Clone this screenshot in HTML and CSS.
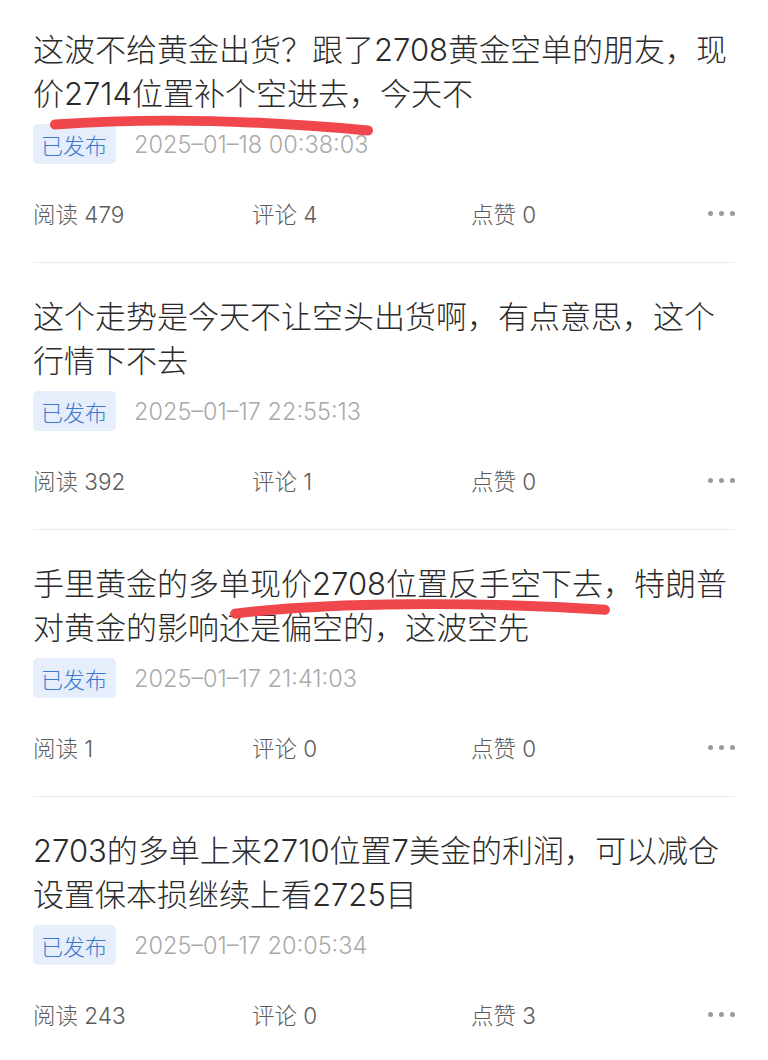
FILE: index.html
```html
<!DOCTYPE html>
<html lang="zh-CN">
<head>
<meta charset="utf-8">
<title>动态列表</title>
<link rel="stylesheet" href="styles.css">
</head>
<body>
<div class="list">
  <div class="item">
    <div class="title">这波不给黄金出货？跟了2708黄金空单的朋友，现价2714位置补个空进去，今天不</div>
    <div class="meta"><span class="badge">已发布</span><span class="date">2025–01–18 00:38:03</span></div>
    <div class="stats"><span>阅读 479</span><span>评论 4</span><span>点赞 0</span><span class="more"><i></i><i></i><i></i></span></div>
    <svg class="mark" viewBox="0 0 702 263" preserveAspectRatio="none"><path d="M22 125 C 117 118, 227 121, 335 131"/></svg>
  </div>
  <div class="item">
    <div class="title">这个走势是今天不让空头出货啊，有点意思，这个行情下不去</div>
    <div class="meta"><span class="badge">已发布</span><span class="date">2025–01–17 22:55:13</span></div>
    <div class="stats"><span>阅读 392</span><span>评论 1</span><span>点赞 0</span><span class="more"><i></i><i></i><i></i></span></div>
  </div>
  <div class="item">
    <div class="title">手里黄金的多单现价2708位置反手空下去，特朗普对黄金的影响还是偏空的，这波空先</div>
    <div class="meta"><span class="badge">已发布</span><span class="date">2025–01–17 21:41:03</span></div>
    <div class="stats"><span>阅读 1</span><span>评论 0</span><span>点赞 0</span><span class="more"><i></i><i></i><i></i></span></div>
    <svg class="mark" viewBox="0 0 702 267" preserveAspectRatio="none"><path d="M202 84 C 297 72, 447 72, 572 80"/></svg>
  </div>
  <div class="item">
    <div class="title">2703的多单上来2710位置7美金的利润，可以减仓设置保本损继续上看2725目</div>
    <div class="meta"><span class="badge">已发布</span><span class="date">2025–01–17 20:05:34</span></div>
    <div class="stats"><span>阅读 243</span><span>评论 0</span><span>点赞 3</span><span class="more"><i></i><i></i><i></i></span></div>
  </div>
</div>
</body>
</html>
```

FILE: styles.css
```css
html, body {
  margin: 0;
  padding: 0;
  background: #ffffff;
}
body {
  font-family: Inter, "Noto Sans CJK SC", sans-serif;
  overflow: hidden;
}
.list {
  padding: 0 33px;
}
.item {
  position: relative;
  padding: 32px 0 35px;
  border-bottom: 1px solid #ebebeb;
}
.item:first-child {
  padding-top: 28px;
}
.title {
  font-size: 31px;
  line-height: 44px;
  font-weight: 300;
  color: #2b2b2b;
}
.meta {
  display: flex;
  align-items: center;
  gap: 18px;
  margin-top: 8px;
}
.badge {
  height: 40px;
  line-height: 40px;
  padding: 0 9px 0 8px;
  border-radius: 5px;
  background: #e5eefa;
  color: #3a78cf;
  font-size: 22px;
  font-weight: 300;
  font-family: "Noto Sans CJK SC", sans-serif;
}
.date {
  font-size: 23.5px;
  font-weight: 300;
  color: #aaaaaa;
}
.stats {
  display: grid;
  grid-template-columns: 219px 219px 1fr auto;
  align-items: center;
  margin-top: 33px;
  height: 30px;
  font-size: 22.5px;
  font-weight: 300;
  color: #5c5c5c;
}
.more {
  display: flex;
  gap: 6px;
  align-items: center;
}
.more i {
  display: block;
  width: 5px;
  height: 5px;
  border-radius: 50%;
  background: #9a9a9a;
}
.mark {
  position: absolute;
  left: 0;
  top: 0;
  width: 100%;
  height: 100%;
  overflow: visible;
  pointer-events: none;
}
.mark path {
  fill: none;
  stroke: #f0474c;
  stroke-width: 10;
  stroke-linecap: round;
}
```
